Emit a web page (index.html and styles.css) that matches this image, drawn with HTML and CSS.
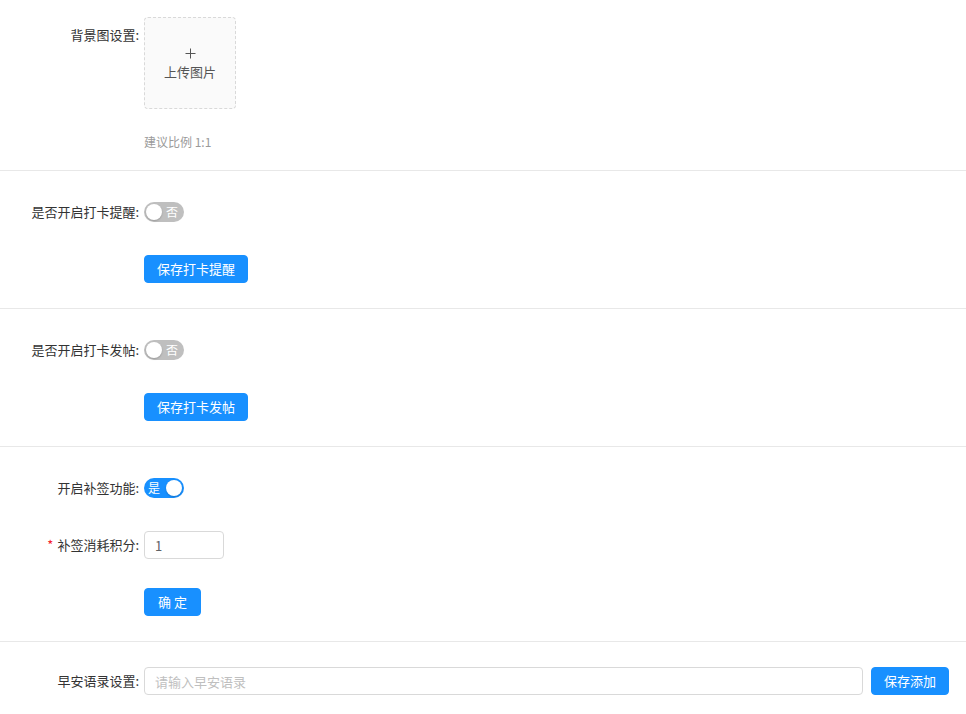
FILE: index.html
```html
<!DOCTYPE html>
<html lang="zh-CN">
<head>
<meta charset="utf-8">
<title>设置</title>
<link rel="stylesheet" href="styles.css">
</head>
<body>
<div class="page">
  <section class="sec sec-first">
    <div class="row row-top">
      <label class="lbl lbl-top">背景图设置:</label>
      <div class="ctl-col">
        <div class="upload">
          <svg class="plus" width="11" height="11" viewBox="0 0 11 11"><path d="M5.5 0.5v10M0.5 5.5h10" stroke="#555" stroke-width="1" fill="none"/></svg>
          <span class="upload-text">上传图片</span>
        </div>
        <div class="hint">建议比例 1:1</div>
      </div>
    </div>
  </section>

  <section class="sec">
    <div class="row">
      <label class="lbl">是否开启打卡提醒:</label>
      <span class="switch"><span class="knob"></span><span class="sw-text">否</span></span>
    </div>
    <div class="row">
      <span class="lbl"></span>
      <button class="btn">保存打卡提醒</button>
    </div>
  </section>

  <section class="sec">
    <div class="row">
      <label class="lbl">是否开启打卡发帖:</label>
      <span class="switch"><span class="knob"></span><span class="sw-text">否</span></span>
    </div>
    <div class="row">
      <span class="lbl"></span>
      <button class="btn">保存打卡发帖</button>
    </div>
  </section>

  <section class="sec">
    <div class="row">
      <label class="lbl">开启补签功能:</label>
      <span class="switch on"><span class="sw-text">是</span><span class="knob"></span></span>
    </div>
    <div class="row">
      <label class="lbl"><span class="req">*</span>补签消耗积分:</label>
      <input class="input input-small" type="text" value="1">
    </div>
    <div class="row">
      <span class="lbl"></span>
      <button class="btn btn-ok">确 定</button>
    </div>
  </section>

  <section class="sec sec-last">
    <div class="row">
      <label class="lbl">早安语录设置:</label>
      <input class="input input-wide" type="text" placeholder="请输入早安语录">
      <button class="btn btn-add">保存添加</button>
    </div>
  </section>
</div>
</body>
</html>
```

FILE: styles.css
```css
html, body {
  margin: 0;
  padding: 0;
  background: #fff;
}

body {
  font-family: "Noto Sans CJK SC", "Noto Sans", sans-serif;
  font-size: 13px;
  color: #333;
}

.page {
  width: 966px;
}

.sec {
  display: flex;
  flex-direction: column;
  gap: 29px;
  padding: 27px 17px 25px 0;
  border-top: 1px solid #e8e8e8;
}

.sec-first {
  border-top: none;
  padding: 17px 17px 18px 0;
}

.sec-last {
  padding-top: 25px;
  padding-bottom: 18px;
}

.row {
  display: flex;
  align-items: center;
  height: 28px;
}

.row-top {
  align-items: flex-start;
  height: auto;
}

.lbl {
  flex: 0 0 144px;
  width: 144px;
  box-sizing: border-box;
  padding-right: 5px;
  text-align: right;
  white-space: nowrap;
  color: #333;
  line-height: 28px;
}

.lbl-top {
  line-height: 36px;
}

.req {
  color: #f5222d;
  margin-right: 4px;
}

.ctl-col {
  display: flex;
  flex-direction: column;
}

.upload {
  width: 92px;
  height: 92px;
  box-sizing: border-box;
  border: 1px dashed #d9d9d9;
  border-radius: 4px;
  background: #fafafa;
  display: flex;
  flex-direction: column;
  align-items: center;
  justify-content: center;
  gap: 5px;
}

.plus {
  display: block;
  margin-top: 1px;
}

.upload-text {
  color: #555;
  font-size: 13px;
  line-height: 16px;
}

.hint {
  margin-top: 23px;
  font-size: 12px;
  line-height: 20px;
  color: #9a9a9a;
}

.switch {
  position: relative;
  display: inline-flex;
  align-items: center;
  width: 40px;
  height: 20px;
  box-sizing: border-box;
  border-radius: 10px;
  background: #bfbfbf;
  padding: 0 2px;
  gap: 4px;
}

.switch.on {
  background: #1890ff;
  justify-content: flex-end;
  padding: 0 2px 0 6px;
}

.knob {
  width: 16px;
  height: 16px;
  border-radius: 50%;
  background: #fff;
  box-shadow: 0 1px 2px rgba(0, 0, 0, 0.2);
  flex: 0 0 16px;
}

.sw-text {
  color: #fff;
  font-size: 12px;
  line-height: 20px;
}

.switch.on .sw-text {
  margin-right: 2px;
}

.btn {
  height: 28px;
  padding: 0 12px;
  border: 1px solid #1890ff;
  border-radius: 4px;
  background: #1890ff;
  color: #fff;
  font-family: "Noto Sans CJK SC", "Noto Sans", sans-serif;
  font-size: 13px;
  line-height: 26px;
  cursor: pointer;
}

.btn-ok {
  padding: 0 13px;
}

.input {
  height: 28px;
  box-sizing: border-box;
  border: 1px solid #d9d9d9;
  border-radius: 4px;
  padding: 0 10px;
  font-family: "Noto Sans CJK SC", "Noto Sans", sans-serif;
  font-size: 13px;
  color: #606266;
  background: #fff;
  outline: none;
}

.input::placeholder {
  color: #bfbfbf;
}

.input-small {
  width: 80px;
}

.input-wide {
  flex: 1 1 auto;
  min-width: 0;
}

.btn-add {
  margin-left: 8px;
  flex: 0 0 auto;
}
```
